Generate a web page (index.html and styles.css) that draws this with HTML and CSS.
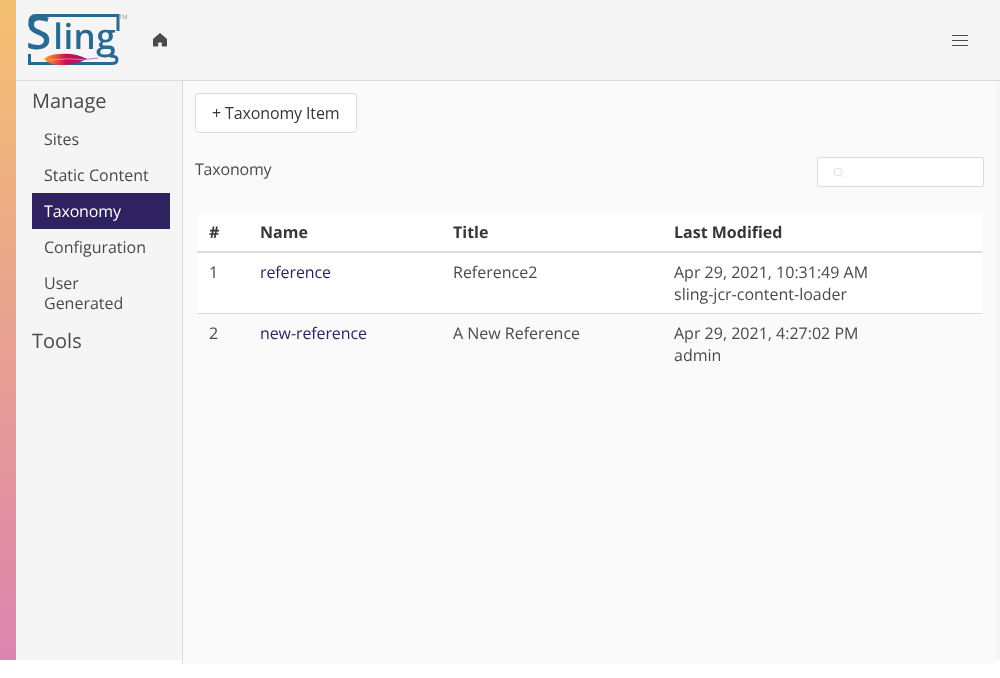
FILE: index.html
```html
<!DOCTYPE html>
<html lang="en">
<head>
    <meta charset="UTF-8">
    <title>Taxonomy</title>
    <link rel="stylesheet" href="styles.css">
</head>
<body>
    <div id="page">
        <div id="gradient"></div>
        <div id="shell">
            <header id="topbar">
                <a class="logo" href="#">
                    <svg class="logo-art" width="100" height="52" viewBox="0 0 100 52">
                        <defs>
                            <linearGradient id="feather" x1="0" y1="0" x2="1" y2="0">
                                <stop offset="0" stop-color="#f0a030"/>
                                <stop offset="0.25" stop-color="#e8603a"/>
                                <stop offset="0.5" stop-color="#cf0f50"/>
                                <stop offset="0.85" stop-color="#b01468"/>
                                <stop offset="1" stop-color="#7d2a90"/>
                            </linearGradient>
                        </defs>
                        <path d="M2 12 V8 Q2 1.5 8 1.5 H90 V17" class="frame"/>
                        <path d="M1.5 40 V49.5 H84 Q89 49.5 89 45.5 Q89 42 82 42" class="frame"/>
                        <path d="M16 45 Q21 40 33 40 Q48 39 59 45 Q47 51 33 51 Q21 51 16 45 Z" fill="url(#feather)"/>
                        <path d="M22 46 Q40 44 56 45.5" stroke="#f6c0c8" stroke-width="0.6" fill="none"/>
                        <path d="M56 45.5 L70 44" stroke="#9a4aa0" stroke-width="0.7" fill="none"/>
                    </svg>
                    <span class="logo-word"><span class="logo-s">S</span><span class="logo-ling">ling</span></span>
                    <span class="logo-tm">TM</span>
                </a>
                <a class="home" href="#">
                    <svg width="16" height="16" viewBox="0 0 16 16">
                        <path d="M8 1.5 L14.5 7 V14 H10.2 V10 H5.8 V14 H1.5 V7 Z" fill="#4a4a4a" stroke="#4a4a4a" stroke-width="1" stroke-linejoin="round"/>
                    </svg>
                </a>
                <button class="burger" type="button" aria-label="Menu">
                    <span></span><span></span><span></span>
                </button>
            </header>
            <div id="body-row">
                <nav id="sidebar">
                    <p class="menu-label">Manage</p>
                    <ul class="menu-list">
                        <li><a href="#">Sites</a></li>
                        <li><a href="#">Static Content</a></li>
                        <li><a href="#" class="active">Taxonomy</a></li>
                        <li><a href="#">Configuration</a></li>
                        <li><a href="#">User Generated</a></li>
                    </ul>
                    <p class="menu-label">Tools</p>
                </nav>
                <main id="main">
                    <button class="add-btn" type="button">+ Taxonomy Item</button>
                    <div class="title-row">
                        <div class="section-title">Taxonomy</div>
                        <div class="search">
                            <svg width="11" height="11" viewBox="0 0 11 11">
                                <circle cx="5" cy="5" r="3.8" fill="none" stroke="#dedede" stroke-width="1"/>
                                <path d="M8 8 L10 10" stroke="#dedede" stroke-width="1"/>
                            </svg>
                        </div>
                    </div>
                    <table class="data-table">
                        <thead>
                            <tr>
                                <th class="col-num">#</th>
                                <th class="col-name">Name</th>
                                <th class="col-title">Title</th>
                                <th>Last Modified</th>
                            </tr>
                        </thead>
                        <tbody>
                            <tr>
                                <td>1</td>
                                <td><a href="#">reference</a></td>
                                <td>Reference2</td>
                                <td>Apr 29, 2021, 10:31:49 AM<br>sling-jcr-content-loader</td>
                            </tr>
                            <tr>
                                <td>2</td>
                                <td><a href="#">new-reference</a></td>
                                <td>A New Reference</td>
                                <td>Apr 29, 2021, 4:27:02 PM<br>admin</td>
                            </tr>
                        </tbody>
                    </table>
                </main>
            </div>
        </div>
    </div>
</body>
</html>
```

FILE: styles.css
```css
html, body {
    margin: 0;
    padding: 0;
    background: #fff;
    font-family: "Open Sans", sans-serif;
    font-size: 16px;
    color: #4a4a4a;
    text-rendering: geometricPrecision;
    font-kerning: normal;
}
a {
    text-decoration: none;
    color: inherit;
}
#page {
    display: flex;
    height: 678px;
    overflow: hidden;
    will-change: transform;
}
#gradient {
    width: 16px;
    height: 660px;
    flex: none;
    background: linear-gradient(to bottom, #f4c070, #dc84b0);
}
#shell {
    flex: 1;
    min-width: 0;
    height: 660px;
    background: #f5f5f5;
}
#topbar {
    display: flex;
    align-items: center;
    height: 80px;
    border-bottom: 1px solid #dbdbdb;
}
.logo {
    position: relative;
    display: block;
    flex: none;
    width: 100px;
    height: 52px;
    margin-left: 12px;
}
.logo-art {
    position: absolute;
    top: 0;
    left: 0;
}
.frame {
    fill: none;
    stroke: #2a6a92;
    stroke-width: 3;
}
.logo-word {
    position: absolute;
    top: -7px;
    left: -2px;
    display: flex;
    align-items: baseline;
    color: #2a6a92;
    white-space: nowrap;
}
.logo-s {
    font-size: 46px;
    font-weight: 600;
    line-height: 50px;
}
.logo-ling {
    font-size: 35px;
    font-weight: 600;
    line-height: 50px;
    letter-spacing: 0.4px;
    margin-left: 2px;
}
.logo-tm {
    position: absolute;
    top: 0;
    left: 91px;
    font-size: 6px;
    line-height: 6px;
    color: #999;
}
.home {
    display: flex;
    margin-left: 24px;
}
.burger {
    display: flex;
    flex-direction: column;
    gap: 4px;
    margin-left: auto;
    margin-right: 32px;
    padding: 0;
    border: 0;
    background: none;
}
.burger span {
    display: block;
    width: 16px;
    height: 1px;
    background: #4a4a4a;
}
#body-row {
    display: flex;
}
#sidebar {
    width: 138px;
    height: 575px;
    padding: 8px 12px 0 16px;
    flex: none;
    border-right: 1px solid #dbdbdb;
}
.menu-label {
    margin: 0;
    font-size: 20px;
    line-height: 24px;
    padding-bottom: 8px;
}
.menu-list {
    list-style: none;
    margin: 0 0 8px;
    padding: 0;
}
.menu-list a {
    display: block;
    padding: 8px 12px;
    line-height: 20px;
}
.menu-list a.active {
    background: #2e2360;
    color: #fff;
    letter-spacing: -0.15px;
}
#main {
    width: 801px;
    height: 583px;
    flex: none;
    padding-left: 12px;
    background: #fafafa;
}
.add-btn {
    display: block;
    height: 40px;
    margin-top: 12px;
    padding: 0 17px 0 16px;
    font: inherit;
    letter-spacing: -0.13px;
    color: #363636;
    background: #fff;
    border: 1px solid #dbdbdb;
    border-radius: 4px;
}
.title-row {
    display: flex;
    justify-content: space-between;
    margin-top: 24px;
    padding-right: 12px;
}
.section-title {
    line-height: 24px;
    letter-spacing: -0.2px;
}
.search {
    display: flex;
    align-items: center;
    width: 165px;
    height: 28px;
    background: #fff;
    border: 1px solid #dbdbdb;
    border-radius: 2px;
}
.search svg {
    margin-left: 15px;
}
.data-table {
    width: 785px;
    margin: 26px 0 0 2px;
    border-collapse: collapse;
    line-height: 22px;
}
.data-table th,
.data-table td {
    padding: 8px 12px;
    text-align: left;
    vertical-align: top;
}
.data-table th {
    color: #363636;
    font-weight: 700;
    background: #fff;
    border-bottom: 2px solid #dbdbdb;
}
.data-table td {
    border-bottom: 1px solid #dbdbdb;
}
.data-table tbody tr:nth-child(odd) td {
    background: #fff;
}
.data-table tbody tr:last-child td {
    border-bottom: 0;
}
.data-table td a {
    color: #2e2360;
    letter-spacing: -0.1px;
}
.col-num {
    width: 27px;
}
.col-name {
    width: 169px;
}
.col-title {
    width: 197px;
}
```
